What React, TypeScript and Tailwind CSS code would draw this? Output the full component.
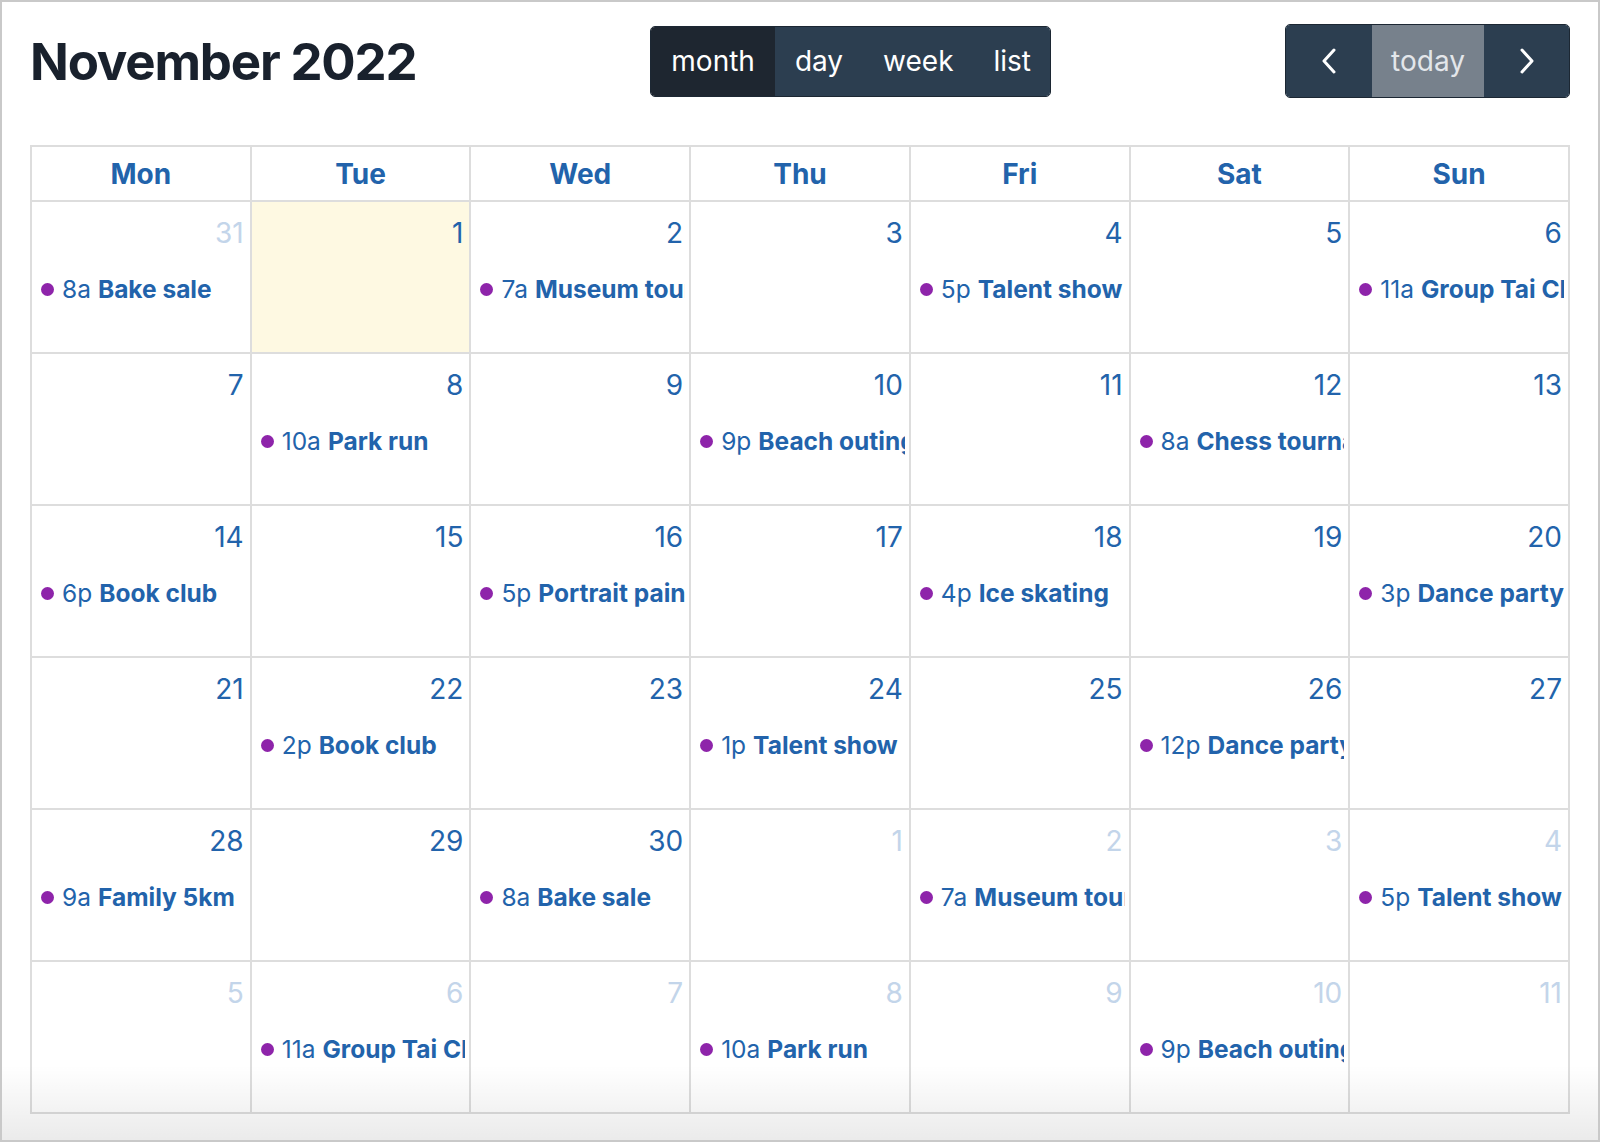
import React from "react";

type Ev = { time: string; title: string };
type Day = { n: number; other?: boolean; today?: boolean; ev?: Ev };

const rows: Day[][] = [
  [
    { n: 31, other: true, ev: { time: "8a", title: "Bake sale" } },
    { n: 1, today: true },
    { n: 2, ev: { time: "7a", title: "Museum tour" } },
    { n: 3 },
    { n: 4, ev: { time: "5p", title: "Talent show" } },
    { n: 5 },
    { n: 6, ev: { time: "11a", title: "Group Tai Chi" } },
  ],
  [
    { n: 7 },
    { n: 8, ev: { time: "10a", title: "Park run" } },
    { n: 9 },
    { n: 10, ev: { time: "9p", title: "Beach outing" } },
    { n: 11 },
    { n: 12, ev: { time: "8a", title: "Chess tournament" } },
    { n: 13 },
  ],
  [
    { n: 14, ev: { time: "6p", title: "Book club" } },
    { n: 15 },
    { n: 16, ev: { time: "5p", title: "Portrait painting" } },
    { n: 17 },
    { n: 18, ev: { time: "4p", title: "Ice skating" } },
    { n: 19 },
    { n: 20, ev: { time: "3p", title: "Dance party" } },
  ],
  [
    { n: 21 },
    { n: 22, ev: { time: "2p", title: "Book club" } },
    { n: 23 },
    { n: 24, ev: { time: "1p", title: "Talent show" } },
    { n: 25 },
    { n: 26, ev: { time: "12p", title: "Dance party" } },
    { n: 27 },
  ],
  [
    { n: 28, ev: { time: "9a", title: "Family 5km" } },
    { n: 29 },
    { n: 30, ev: { time: "8a", title: "Bake sale" } },
    { n: 1, other: true },
    { n: 2, other: true, ev: { time: "7a", title: "Museum tour" } },
    { n: 3, other: true },
    { n: 4, other: true, ev: { time: "5p", title: "Talent show" } },
  ],
  [
    { n: 5, other: true },
    { n: 6, other: true, ev: { time: "11a", title: "Group Tai Chi" } },
    { n: 7, other: true },
    { n: 8, other: true, ev: { time: "10a", title: "Park run" } },
    { n: 9, other: true },
    { n: 10, other: true, ev: { time: "9p", title: "Beach outing" } },
    { n: 11, other: true },
  ],
];

const heads = ["Mon", "Tue", "Wed", "Thu", "Fri", "Sat", "Sun"];

function Chevron({ dir }: { dir: "left" | "right" }) {
  return (
    <svg width="16" height="26" viewBox="0 0 16 26" fill="none">
      <path
        d={dir === "left" ? "M13 2 L3 13 L13 24" : "M3 2 L13 13 L3 24"}
        stroke="white"
        strokeWidth="3"
        strokeLinecap="round"
        strokeLinejoin="round"
      />
    </svg>
  );
}

export default function App() {
  return (
    <div className="relative w-[1600px] h-[1142px] overflow-hidden border-2 border-[#c9c9c9] bg-white font-['Inter','Noto_Sans',sans-serif]">
      <div className="px-[28px] pt-[22px]">
        <div className="flex h-[74px] items-center justify-between mb-[47px]">
          <h1 className="text-[51px] font-bold leading-none tracking-[-1.2px] text-[#19212d]">
            November 2022
          </h1>
          <div className="flex h-[71px] overflow-hidden rounded-[5px] border border-[#1c2733] text-[28px] text-white">
            <div className="flex items-center bg-[#1e2630] px-[20px]">month</div>
            <div className="flex items-center bg-[#2c3e50] px-[20px]">day</div>
            <div className="flex items-center bg-[#2c3e50] px-[20px]">week</div>
            <div className="flex items-center bg-[#2c3e50] pl-[20px] pr-[19px]">list</div>
          </div>
          <div className="flex h-[74px] overflow-hidden rounded-[5px] border border-[#1c2733] text-[28px]">
            <div className="flex w-[86px] items-center justify-center bg-[#2c3e50]">
              <Chevron dir="left" />
            </div>
            <div className="flex w-[112px] items-center justify-center bg-[#77818c] text-[#e3e6ea]">
              today
            </div>
            <div className="flex w-[85px] items-center justify-center bg-[#2c3e50]">
              <Chevron dir="right" />
            </div>
          </div>
        </div>

        <div className="grid h-[969px] grid-cols-7 grid-rows-[55px_repeat(6,minmax(0,1fr))] border-l-2 border-t-2 border-[#dddddd]">
          {heads.map((h) => (
            <div
              key={h}
              className="flex items-center justify-center border-b-2 border-r-2 border-[#dddddd] text-[28px] font-bold text-[#2263ab]"
            >
              {h}
            </div>
          ))}
          {rows.flat().map((d, i) => (
            <div
              key={i}
              className={`flex min-w-0 flex-col border-b-2 border-r-2 border-[#dddddd] ${
                d.today ? "bg-[#fef9e2]" : "bg-white"
              }`}
            >
              <div
                className={`pr-[6px] pt-[10px] text-right text-[28px] leading-[42px] ${
                  d.other ? "text-[#c3d5ea]" : "text-[#2263ab]"
                }`}
              >
                {d.n}
              </div>
              {d.ev && (
                <div className="ml-[3px] mr-[4px] mt-[17px] flex items-center overflow-hidden whitespace-nowrap pl-[6px] text-[24.5px] leading-[36px] text-[#2263ab]">
                  <span className="mr-[8px] h-[13px] w-[13px] shrink-0 rounded-full bg-[#8e24aa]" />
                  <span>{d.ev.time}</span>
                  <span className="ml-[7px] font-bold">{d.ev.title}</span>
                </div>
              )}
            </div>
          ))}
        </div>
      </div>
      <div className="pointer-events-none absolute bottom-0 left-0 right-0 h-[75px] bg-gradient-to-b from-transparent to-black/[0.08]" />
    </div>
  );
}
